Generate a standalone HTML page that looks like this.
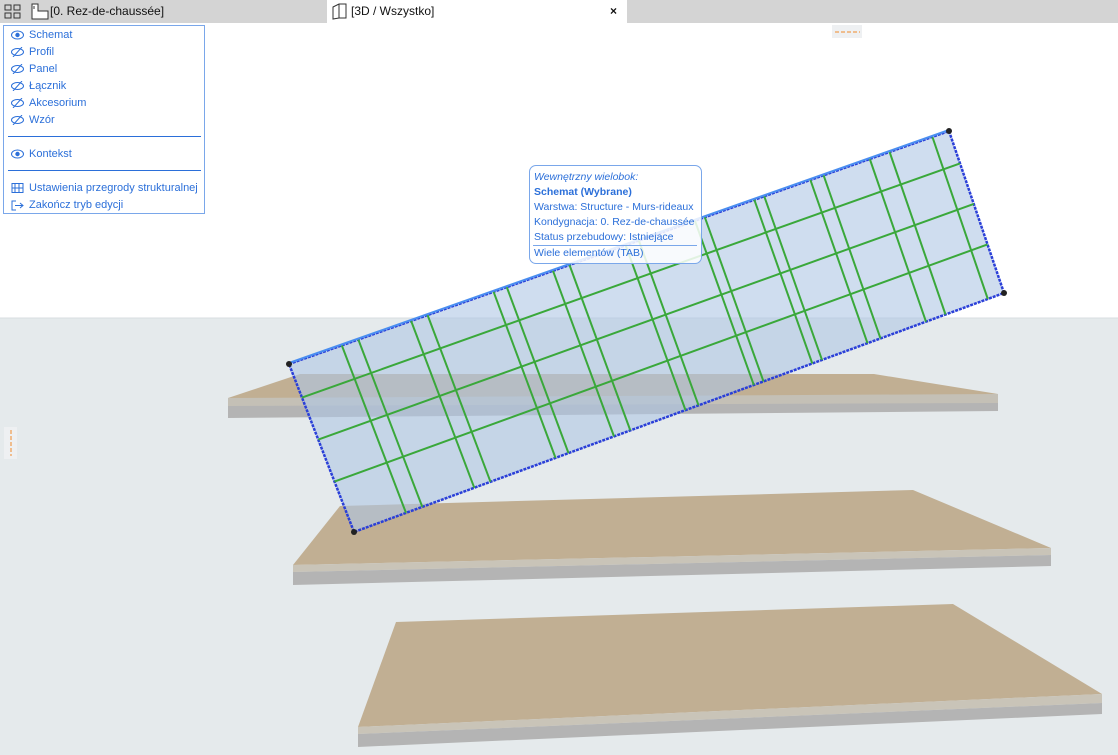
<!DOCTYPE html>
<html><head><meta charset="utf-8"><style>
body{margin:0;width:1118px;height:755px;overflow:hidden;background:#fff;font-family:"Liberation Sans",sans-serif;position:relative}
.tabbar{position:absolute;left:0;top:0;width:1118px;height:23px;background:#d4d4d4}
.tab{position:absolute;top:0;height:23px;font-size:12px;line-height:23px;color:#111;white-space:nowrap}
.menu{position:absolute;left:3px;top:25px;width:200px;height:187px;border:1px solid #7aa7ea;background:#fff;font-size:11px;color:#2b6fd9}
.mi{position:absolute;left:7px;height:17px;line-height:17px;white-space:nowrap}
.mi svg{vertical-align:middle;margin-right:5px}
.sep{position:absolute;left:4px;width:193px;height:1px;background:#2b6fd9}
.tip{position:absolute;left:529px;top:165px;width:171px;height:97px;border:1px solid #7aa7ea;border-radius:7px;background:rgba(255,255,255,.85);font-size:10.5px;color:#2b6fd9}
.tip div{position:absolute;left:4px;white-space:nowrap}
</style></head><body>
<svg style="position:absolute;left:0;top:0" width="1118" height="755">
<rect x="0" y="318" width="1118" height="437" fill="#e5eaec"/>
<line x1="0" y1="318" x2="1118" y2="318" fill="none" stroke="#d8dde0"/>
<polygon points="228,398 300,374 874,374 998,394 998,404 228,407" fill="#c1af93"/>
<polygon points="228,398 998,394 998,404 228,407" fill="#c4c0b6"/>
<polygon points="228,406 998,403 998,411 228,418" fill="#b4b4b4"/>
<polygon points="293,565 340,506 913,490 1051,548" fill="#c1af93"/>
<polygon points="293,565 1051,548 1051,555 293,572" fill="#c9c4b8"/>
<polygon points="293,572 1051,555 1051,566 293,585" fill="#b4b4b4"/>
<polygon points="358,727 396,622 953,604 1102,694" fill="#c1af93"/>
<polygon points="358,727 1102,694 1102,703 358,734" fill="#c9c4b8"/>
<polygon points="358,734 1102,703 1102,714 358,747" fill="#b4b4b4"/>
<polygon points="289,364 949,131 1004,293 354,532" fill="rgba(175,198,228,0.6)" stroke="#2a3fd8" stroke-width="2.5" stroke-dasharray="3,1"/>
<g stroke="#3aa83a" stroke-width="2">
<line x1="341.8" y1="345.4" x2="406" y2="512.9"/><line x1="358.3" y1="339.5" x2="422.3" y2="506.9"/>
<line x1="411.1" y1="320.9" x2="474.3" y2="487.8"/><line x1="427.6" y1="315.1" x2="490.5" y2="481.8"/>
<line x1="493.6" y1="291.8" x2="555.5" y2="457.9"/><line x1="506.8" y1="287.1" x2="568.5" y2="453.1"/>
<line x1="553" y1="270.8" x2="614" y2="436.4"/><line x1="569.5" y1="265" x2="630.3" y2="430.4"/>
<line x1="625.6" y1="245.2" x2="685.5" y2="410.1"/><line x1="638.8" y1="240.5" x2="698.5" y2="405.3"/>
<line x1="694.9" y1="220.7" x2="753.8" y2="385"/><line x1="704.8" y1="217.2" x2="763.5" y2="381.4"/>
<line x1="754.3" y1="199.7" x2="812.3" y2="363.5"/><line x1="764.2" y1="196.2" x2="822" y2="359.9"/>
<line x1="810.4" y1="179.9" x2="867.5" y2="343.2"/><line x1="823.6" y1="175.3" x2="880.5" y2="338.4"/>
<line x1="869.8" y1="159" x2="926" y2="321.7"/><line x1="889.6" y1="152" x2="945.5" y2="314.5"/>
<line x1="932.5" y1="137.2" x2="987.8" y2="299"/>
<line x1="302" y1="397.6" x2="960" y2="163.4"/><line x1="318.3" y1="439.6" x2="973.8" y2="203.9"/>
<line x1="334.5" y1="481.6" x2="987.5" y2="244.4"/>
</g>
<line x1="289" y1="363" x2="949" y2="130" stroke="#4a8ef0" stroke-width="2"/>
<g fill="#222"><circle cx="289" cy="364" r="3"/><circle cx="949" cy="131" r="3"/><circle cx="1004" cy="293" r="3"/><circle cx="354" cy="532" r="3"/></g>
<rect x="832" y="25" width="30" height="13" fill="#eef0f2"/>
<line x1="835" y1="32" x2="860" y2="32" stroke="#f08a2a" stroke-dasharray="4,2"/>
<rect x="4" y="427" width="13" height="32" fill="#eef0f2"/>
<line x1="11" y1="430" x2="11" y2="456" stroke="#f08a2a" stroke-dasharray="4,2"/>
</svg>
<div class="tabbar">
<svg style="position:absolute;left:4px;top:4px" width="18" height="16"><g fill="none" stroke="#333"><rect x="1" y="1" width="6" height="5"/><rect x="10" y="1" width="6" height="5"/><rect x="1" y="9" width="6" height="5"/><rect x="10" y="9" width="6" height="5"/></g></svg>
<svg style="position:absolute;left:31px;top:3px" width="18" height="17"><path d="M1 1V16H17V8H7V1Z" fill="#fff" stroke="#333"/><path d="M3 3V6" stroke="#333"/></svg>
<div class="tab" style="left:50px">[0. Rez-de-chaussée]</div>
<div style="position:absolute;left:327px;top:0;width:300px;height:23px;background:#fff"></div>
<svg style="position:absolute;left:331px;top:3px" width="18" height="17"><path d="M2 4L8 1H15V15H8L2 16Z M8 1V15" fill="#fff" stroke="#333"/></svg>
<div class="tab" style="left:351px">[3D / Wszystko]</div>
<div class="tab" style="left:610px;font-weight:bold">×</div>
</div>
<div class="menu">
<div class="mi" style="top:1px"><svg width="13" height="10"><ellipse cx="6.5" cy="5" rx="6" ry="4" fill="none" stroke="#2b6fd9"/><circle cx="6.5" cy="5" r="2.2" fill="#2b6fd9"/></svg>Schemat</div>
<div class="mi" style="top:18px"><svg width="13" height="10"><ellipse cx="6.5" cy="5" rx="6" ry="3.5" fill="none" stroke="#2b6fd9"/><line x1="2" y1="10" x2="11" y2="0" stroke="#2b6fd9"/></svg>Profil</div>
<div class="mi" style="top:35px"><svg width="13" height="10"><ellipse cx="6.5" cy="5" rx="6" ry="3.5" fill="none" stroke="#2b6fd9"/><line x1="2" y1="10" x2="11" y2="0" stroke="#2b6fd9"/></svg>Panel</div>
<div class="mi" style="top:52px"><svg width="13" height="10"><ellipse cx="6.5" cy="5" rx="6" ry="3.5" fill="none" stroke="#2b6fd9"/><line x1="2" y1="10" x2="11" y2="0" stroke="#2b6fd9"/></svg>Łącznik</div>
<div class="mi" style="top:69px"><svg width="13" height="10"><ellipse cx="6.5" cy="5" rx="6" ry="3.5" fill="none" stroke="#2b6fd9"/><line x1="2" y1="10" x2="11" y2="0" stroke="#2b6fd9"/></svg>Akcesorium</div>
<div class="mi" style="top:86px"><svg width="13" height="10"><ellipse cx="6.5" cy="5" rx="6" ry="3.5" fill="none" stroke="#2b6fd9"/><line x1="2" y1="10" x2="11" y2="0" stroke="#2b6fd9"/></svg>Wzór</div>
<div class="sep" style="top:110px"></div>
<div class="mi" style="top:120px"><svg width="13" height="10"><ellipse cx="6.5" cy="5" rx="6" ry="4" fill="none" stroke="#2b6fd9"/><circle cx="6.5" cy="5" r="2.2" fill="#2b6fd9"/></svg>Kontekst</div>
<div class="sep" style="top:144px"></div>
<div class="mi" style="top:154px"><svg width="13" height="10"><rect x="1" y="0.5" width="11" height="9" fill="none" stroke="#2b6fd9"/><path d="M4 0V10M8 0V10M1 5H12" stroke="#2b6fd9"/></svg>Ustawienia przegrody strukturalnej</div>
<div class="mi" style="top:171px"><svg width="13" height="11"><path d="M5 1H1V10H5M4 5.5H12M9 3L12 5.5L9 8" fill="none" stroke="#2b6fd9"/></svg>Zakończ tryb edycji</div>
</div>
<div class="tip">
<div style="top:5px;font-style:italic">Wewnętrzny wielobok:</div>
<div style="top:20px;font-weight:bold">Schemat (Wybrane)</div>
<div style="top:35px">Warstwa: Structure - Murs-rideaux</div>
<div style="top:50px">Kondygnacja: 0. Rez-de-chaussée</div>
<div style="top:65px">Status przebudowy: Istniejące</div>
<div style="top:79px;left:3px;width:164px;height:1px;background:#7aa7ea"></div>
<div style="top:81px">Wiele elementów (TAB)</div>
</div>
</body></html>
